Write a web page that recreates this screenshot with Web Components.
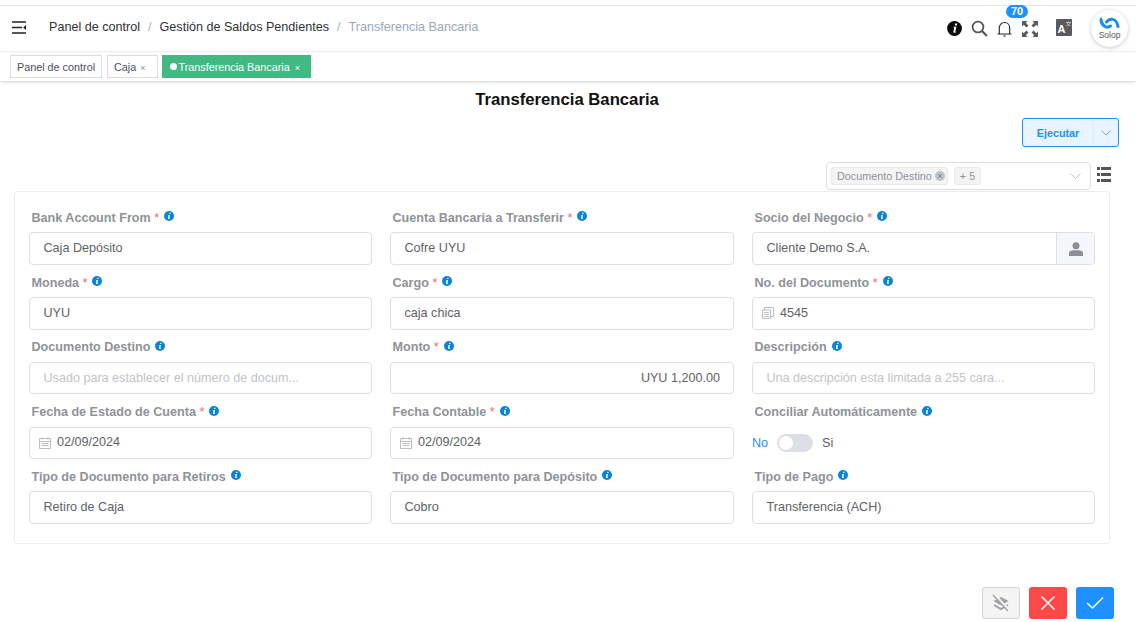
<!DOCTYPE html>
<html lang="es">
<head>
<meta charset="utf-8">
<title>Transferencia Bancaria</title>
<style>
html, body { margin: 0; height: 100%; background: #fff; overflow: hidden; }
body { font-family: "Liberation Sans", Arial, sans-serif; color: #606266; }
</style>
</head>
<body>
<app-topbar></app-topbar>
<tag-strip></tag-strip>
<page-title>Transferencia Bancaria</page-title>
<run-button>Ejecutar</run-button>
<column-select></column-select>
<form-card>
  <form-field label="Bank Account From" required value="Caja Depósito"></form-field>
  <form-field label="Cuenta Bancaria a Transferir" required value="Cofre UYU"></form-field>
  <form-field label="Socio del Negocio" required value="Cliente Demo S.A." kind="person"></form-field>
  <form-field label="Moneda" required value="UYU"></form-field>
  <form-field label="Cargo" required value="caja chica"></form-field>
  <form-field label="No. del Documento" required value="4545" kind="doc"></form-field>
  <form-field label="Documento Destino" placeholder="Usado para establecer el número de docum..."></form-field>
  <form-field label="Monto" required value="UYU 1,200.00" kind="amount"></form-field>
  <form-field label="Descripción" placeholder="Una descripción esta limitada a 255 cara..."></form-field>
  <form-field label="Fecha de Estado de Cuenta" required value="02/09/2024" kind="date"></form-field>
  <form-field label="Fecha Contable" required value="02/09/2024" kind="date"></form-field>
  <form-field label="Conciliar Automáticamente" kind="switch"></form-field>
  <form-field label="Tipo de Documento para Retiros" value="Retiro de Caja"></form-field>
  <form-field label="Tipo de Documento para Depósito" value="Cobro"></form-field>
  <form-field label="Tipo de Pago" value="Transferencia (ACH)"></form-field>
</form-card>
<footer-actions></footer-actions>

<script>
class AppTopbar extends HTMLElement {
  constructor() {
    super();
    this.attachShadow({mode: 'open'}).innerHTML = `
<style>
:host { display: flex; align-items: center; height: 45px; margin-top: 5px; border-top: 1px solid #e4e4e4; padding: 0 8px 0 12px; box-shadow: 0 1px 2px rgba(0,0,0,.05); position: relative; }
.menu { width: 14px; height: 13px; margin-right: 23px; display: block; margin-top: -2px; }
nav { flex: 1; font-size: 12.6px; color: #303133; white-space: nowrap; padding-bottom: 4px; }
nav i { font-style: normal; color: #a8adb8; margin: 0 8px; }
nav span { color: #97a8be; }
.icons { display: flex; align-items: center; }
.icons svg { display: block; }
.bell { position: relative; margin: 0 10px 0 9px; }
.badge { position: absolute; top: -16px; left: 9px; width: 22px; height: 13px; border-radius: 7px; background: #1e90ff; color: #fff; font-size: 11px; font-weight: 700; line-height: 13px; text-align: center; }
.logo { width: 37px; height: 37px; border-radius: 50%; margin-left: 19px; box-shadow: 0 1px 4px rgba(0,0,0,.22); display: flex; flex-direction: column; align-items: center; justify-content: center; background: #fff; }
.logo span { font-size: 8.5px; color: #555; line-height: 10px; }
.tr { margin: -3px 0 0 18px; width: 16px; height: 17px; background: #5a5a5e; border-radius: 1px; display: block; }
</style>
<svg class="menu" viewBox="0 0 14 13"><path d="M0 1h14M0 6.500h10M0 12h14" stroke="#222" stroke-width="1.500" fill="none"/><path d="M14 4v5l-3-2.500z" fill="#222"/></svg>
<nav>Panel de control<i>/</i>Gestión de Saldos Pendientes<i>/</i><span>Transferencia Bancaria</span></nav>
<div class="icons">
  <svg width="15" height="15" viewBox="0 0 15 15" style="margin-right:9px"><circle cx="7.500" cy="7.500" r="7.400" fill="#0a0a0a"/><path d="M8.200 2.600h2.100l-.4 1.900H7.800zM6.600 5.700h2.800L8.300 10.600c-.1.400.3.400.9 0l.2.500c-1 .9-3.200 1.200-3-.3l.8-4.100-.7-.1z" fill="#fff"/></svg>
  <svg width="17" height="17" viewBox="0 0 17 17"><circle cx="7" cy="7" r="5.400" fill="none" stroke="#555" stroke-width="1.800"/><path d="M11 11l5 5" stroke="#555" stroke-width="2.200"/></svg>
  <div class="bell">
    <svg width="15" height="16" viewBox="0 0 15 16"><path d="M.5 13h14M2.300 13V7C2.300 3.800 4.500 1.500 7.500 1.500s5.200 2.300 5.200 5.500V13" fill="none" stroke="#222" stroke-width="1.100"/><path d="M6.400 15h2.200" stroke="#222" stroke-width="1.200"/></svg>
    <div class="badge">70</div>
  </div>
  <svg width="16" height="16" viewBox="0 0 16 16" fill="#5a5a5e"><path d="M0 0h5.500L3.800 1.700 6.500 4.400 4.400 6.500 1.700 3.800 0 5.500zM16 0v5.500l-1.700-1.700-2.700 2.700-2.100-2.100 2.700-2.700L10.500 0zM0 16v-5.500l1.700 1.700 2.700-2.700 2.100 2.100-2.700 2.700L5.500 16zM16 16h-5.500l1.700-1.700-2.700-2.700 2.100-2.100 2.700 2.700 1.700-1.700z"/></svg>
  <svg class="tr" viewBox="0 0 16 17"><text x="1.500" y="14" font-family="Liberation Sans" font-weight="700" font-size="11" fill="#fff">A</text><path d="M10 3.500h5M12.500 2.500v1M11 3.500c.4 1.600 1.600 2.800 3.600 3.400M14 3.500c-.4 1.600-1.600 2.800-3.600 3.400" stroke="#ddd" stroke-width=".7" fill="none"/></svg>
  <div class="logo">
    <svg width="21" height="13" viewBox="0 0 21 13" fill="none" stroke="#1a8fe3" stroke-width="3" stroke-linecap="round"><path d="M2 2c0 6.500 5.500 10 9.500 7"/><path d="M7.500 5C10.500 1 17.500.5 19 9.500"/></svg>
    <span>Solop</span>
  </div>
</div>`;
  }
}
customElements.define('app-topbar', AppTopbar);

class TagStrip extends HTMLElement {
  constructor() {
    super();
    this.attachShadow({mode: 'open'}).innerHTML = `
<style>
:host { display: flex; align-items: flex-start; height: 29px; margin-top: 1px; padding: 3px 0 0 10px; box-sizing: border-box; box-shadow: 0 1px 3px rgba(0,0,0,.18); font-size: 10.8px; gap: 5px; }
div { height: 23px; box-sizing: border-box; border: 1px solid #d8dce5; color: #495060; line-height: 22px; padding: 0 6px; white-space: nowrap; }
b { font-weight: 400; font-size: 9px; color: #8a8f99; margin-left: 1px; }
.caja { padding-right: 11px; }
.on { background: #42b983; border-color: #42b983; color: #fff; padding: 0 10px 0 7px; margin-left: -1px; }
.on b { color: #fff; margin-left: 2px; }
.on::before { content: ""; display: inline-block; width: 7px; height: 7px; border-radius: 50%; background: #fff; margin-right: 2px; vertical-align: 1px; }
</style>
<div>Panel de control</div><div class="caja">Caja <b>×</b></div><div class="on">Transferencia Bancaria <b>×</b></div>`;
  }
}
customElements.define('tag-strip', TagStrip);

class PageTitle extends HTMLElement {
  constructor() {
    super();
    this.attachShadow({mode: 'open'}).innerHTML = `
<style>
:host { display: block; height: 37px; line-height: 37px; padding-right: 2px; text-align: center; font-size: 16.7px; font-weight: 700; color: #111; }
</style><slot></slot>`;
  }
}
customElements.define('page-title', PageTitle);

class RunButton extends HTMLElement {
  constructor() {
    super();
    this.attachShadow({mode: 'open'}).innerHTML = `
<style>
:host { display: flex; justify-content: flex-end; padding-right: 17px; height: 44px; }
.b { display: flex; width: 97px; height: 29px; box-sizing: border-box; border: 1px solid #1e90ff; border-radius: 3px; background: #e8f4ff; color: #1e90ff; font-size: 10.8px; font-weight: 700; line-height: 28px; }
.t { flex: 1; text-align: center; border-right: 1px solid #e0eefc; }
.c { width: 24px; display: flex; align-items: center; justify-content: center; }
</style>
<div class="b"><div class="t"><slot></slot></div><div class="c"><svg width="10" height="6" viewBox="0 0 10 6"><path d="M.5.5L5 5 9.500.5" fill="none" stroke="#6cb2f5"/></svg></div></div>`;
  }
}
customElements.define('run-button', RunButton);

class ColumnSelect extends HTMLElement {
  constructor() {
    super();
    this.attachShadow({mode: 'open'}).innerHTML = `
<style>
:host { display: flex; justify-content: flex-end; align-items: flex-start; height: 29px; padding-right: 25px; gap: 6px; }
.s { width: 265px; height: 28px; box-sizing: border-box; border: 1px solid #dcdfe6; border-radius: 4px; display: flex; align-items: center; padding: 0 9px 0 4px; gap: 6px; }
.t { height: 18px; box-sizing: border-box; background: #f4f4f5; border: 1px solid #e9e9eb; border-radius: 3px; font-size: 10.8px; line-height: 16px; color: #909399; padding: 0 5px; display: flex; align-items: center; gap: 3px; white-space: nowrap; }
.x { width: 10px; height: 10px; border-radius: 50%; background: #c0c4cc; display: block; margin-right: -3px; }
.s svg.ch { margin-left: auto; }
.list { margin-top: 5px; }
</style>
<div class="s">
  <div class="t">Documento Destino <svg class="x" viewBox="0 0 10 10"><path d="M3 3l4 4M7 3L3 7" stroke="#777" stroke-width=".8"/></svg></div>
  <div class="t">+ 5</div>
  <svg class="ch" width="11" height="6" viewBox="0 0 11 6"><path d="M.5.5L5.500 5.500 10.500.5" fill="none" stroke="#c0c4cc"/></svg>
</div>
<svg class="list" width="14" height="15" viewBox="0 0 14 15" fill="#555"><path d="M0 0h3v3H0zM4 0h10v3H4zM0 6h3v3H0zM4 6h10v3H4zM0 12h3v3H0zM4 12h10v3H4z"/></svg>`;
  }
}
customElements.define('column-select', ColumnSelect);

class FormCard extends HTMLElement {
  constructor() {
    super();
    this.attachShadow({mode: 'open'}).innerHTML = `
<style>
:host { display: grid; grid-template-columns: 343px 344px 343px; column-gap: 18px; margin: 0 26px 0 14px; padding: 8.25px 0 19px 14px; border: 1px solid #e9edf3; border-radius: 4px; }
</style><slot></slot>`;
  }
}
customElements.define('form-card', FormCard);

const infoIcon = `<svg class="info" width="10" height="10" viewBox="0 0 10 10"><circle cx="5" cy="5" r="5" fill="#0a84d6"/><path d="M5.300 1.800h1.400l-.3 1.300H5zM4.500 3.900h1.500L5.400 7.200h.6l-.1.7c-1 .3-2 .2-1.900-.6l.5-2.800h-.6z" fill="#fff"/></svg>`;
const leadIcons = {
  doc: `<svg width="12" height="12" viewBox="0 0 12 12" fill="none" stroke="#b4b8c0" stroke-width=".9"><path d="M.5 3h8v8.500h-8zM2.500 3V.5h9v9H8.500M2 5.500h5M2 7.500h5M2 9.500h5"/></svg>`,
  date: `<svg width="12" height="12" viewBox="0 0 12 12" fill="none" stroke="#b4b8c0" stroke-width=".9"><path d="M.5 1.500h11v10H.5zM.5 4.500h11M3 .2v2.500M9 .2v2.500M2.500 6.500h7M2.500 8.500h7"/></svg>`
};

class FormField extends HTMLElement {
  connectedCallback() {
    const label = this.getAttribute('label');
    const value = this.getAttribute('value') || '';
    const placeholder = this.getAttribute('placeholder');
    const kind = this.getAttribute('kind') || '';
    const star = this.hasAttribute('required') ? ' <em>*</em>' : '';
    let control;
    if (kind === 'switch') {
      control = `<div class="sw"><span class="no">No</span><span class="track"><span class="knob"></span></span><span>Si</span></div>`;
    } else {
      const text = placeholder ? `<span class="ph">${placeholder}</span>` : `<span class="v">${value}</span>`;
      const lead = leadIcons[kind] ? `<span class="lead">${leadIcons[kind]}</span>` : '';
      const append = kind === 'person' ? `<span class="app"><svg width="14" height="14" viewBox="0 0 14 14" fill="#8b8f98"><circle cx="7" cy="3.800" r="3.500"/><path d="M0 14v-2.500C0 9.300 2 8.300 4 8.300h6c2 0 4 1 4 3.200V14z"/></svg></span>` : '';
      control = `<div class="in ${kind}">${lead}${text}${append}</div>`;
    }
    this.attachShadow({mode: 'open'}).innerHTML = `
<style>
:host { display: block; height: 64.75px; }
label { display: flex; align-items: center; height: 32px; padding: 3px 0 0 2.5px; font-size: 12.6px; font-weight: 700; color: #8f9299; white-space: nowrap; box-sizing: border-box; }
em { font-style: normal; font-weight: 400; color: #f56c6c; }
.info { margin: -3px 0 0 5px; }
.tx { white-space: pre; }
.in { height: 32.5px; box-sizing: border-box; border: 1px solid #dcdfe6; border-radius: 4px; display: flex; align-items: center; padding-left: 13.5px; font-size: 12.6px; color: #606266; overflow: hidden; }
.v, .ph { margin-top: -1px; }
.ph { color: #c0c4cc; }
.doc, .date { padding-left: 9px; }
.lead { display: block; height: 12px; margin-right: 6px; }
.lead svg { display: block; }
.amount { justify-content: flex-end; padding-right: 13px; }
.person { padding-right: 0; }
.app { margin-left: auto; width: 37px; height: 100%; background: #f5f7fa; border-left: 1px solid #dcdfe6; display: flex; align-items: center; justify-content: center; }
.sw { height: 32.5px; display: flex; align-items: center; font-size: 12.6px; color: #606266; }
.no { color: #1e90ff; }
.track { width: 36px; height: 18px; border-radius: 9px; background: #dcdfe6; margin: 0 9px; position: relative; }
.knob { position: absolute; left: 2px; top: 2px; width: 14px; height: 14px; border-radius: 50%; background: #fff; }
</style>
<label><span class="tx">${label}${star}</span>${infoIcon}</label>
${control}`;
  }
}
customElements.define('form-field', FormField);

class FooterActions extends HTMLElement {
  constructor() {
    super();
    this.attachShadow({mode: 'open'}).innerHTML = `
<style>
:host { display: flex; justify-content: flex-end; gap: 9px; margin-top: 43px; padding-right: 22px; }
div { width: 38px; height: 32px; box-sizing: border-box; border-radius: 3px; display: flex; align-items: center; justify-content: center; }
.a { background: #f4f4f5; border: 1px solid #d3d4d6; }
.b { background: #ff4949; }
.c { background: #1e90ff; }
</style>
<div class="a"><svg width="20" height="20" viewBox="0 0 20 20" fill="none"><path d="M2.500 8l7.500-4 7.500 4-7.500 4.500z" fill="#a0a2a8"/><path d="M3 12l7 4 7-4" stroke="#a0a2a8" stroke-width="2"/><path d="M3.500 1.500l15 16" stroke="#f4f4f5" stroke-width="2.500"/><path d="M2 2l15 16" stroke="#a0a2a8" stroke-width="1.300"/></svg></div>
<div class="b"><svg width="16" height="16" viewBox="0 0 16 16"><path d="M1.500 1.500l13 13M14.500 1.500l-13 13" stroke="#fff" stroke-width="1.500"/></svg></div>
<div class="c"><svg width="18" height="14" viewBox="0 0 18 14"><path d="M1 7l5.500 5L17 1.500" fill="none" stroke="#fff" stroke-width="1.500"/></svg></div>`;
  }
}
customElements.define('footer-actions', FooterActions);
</script>
</body>
</html>
